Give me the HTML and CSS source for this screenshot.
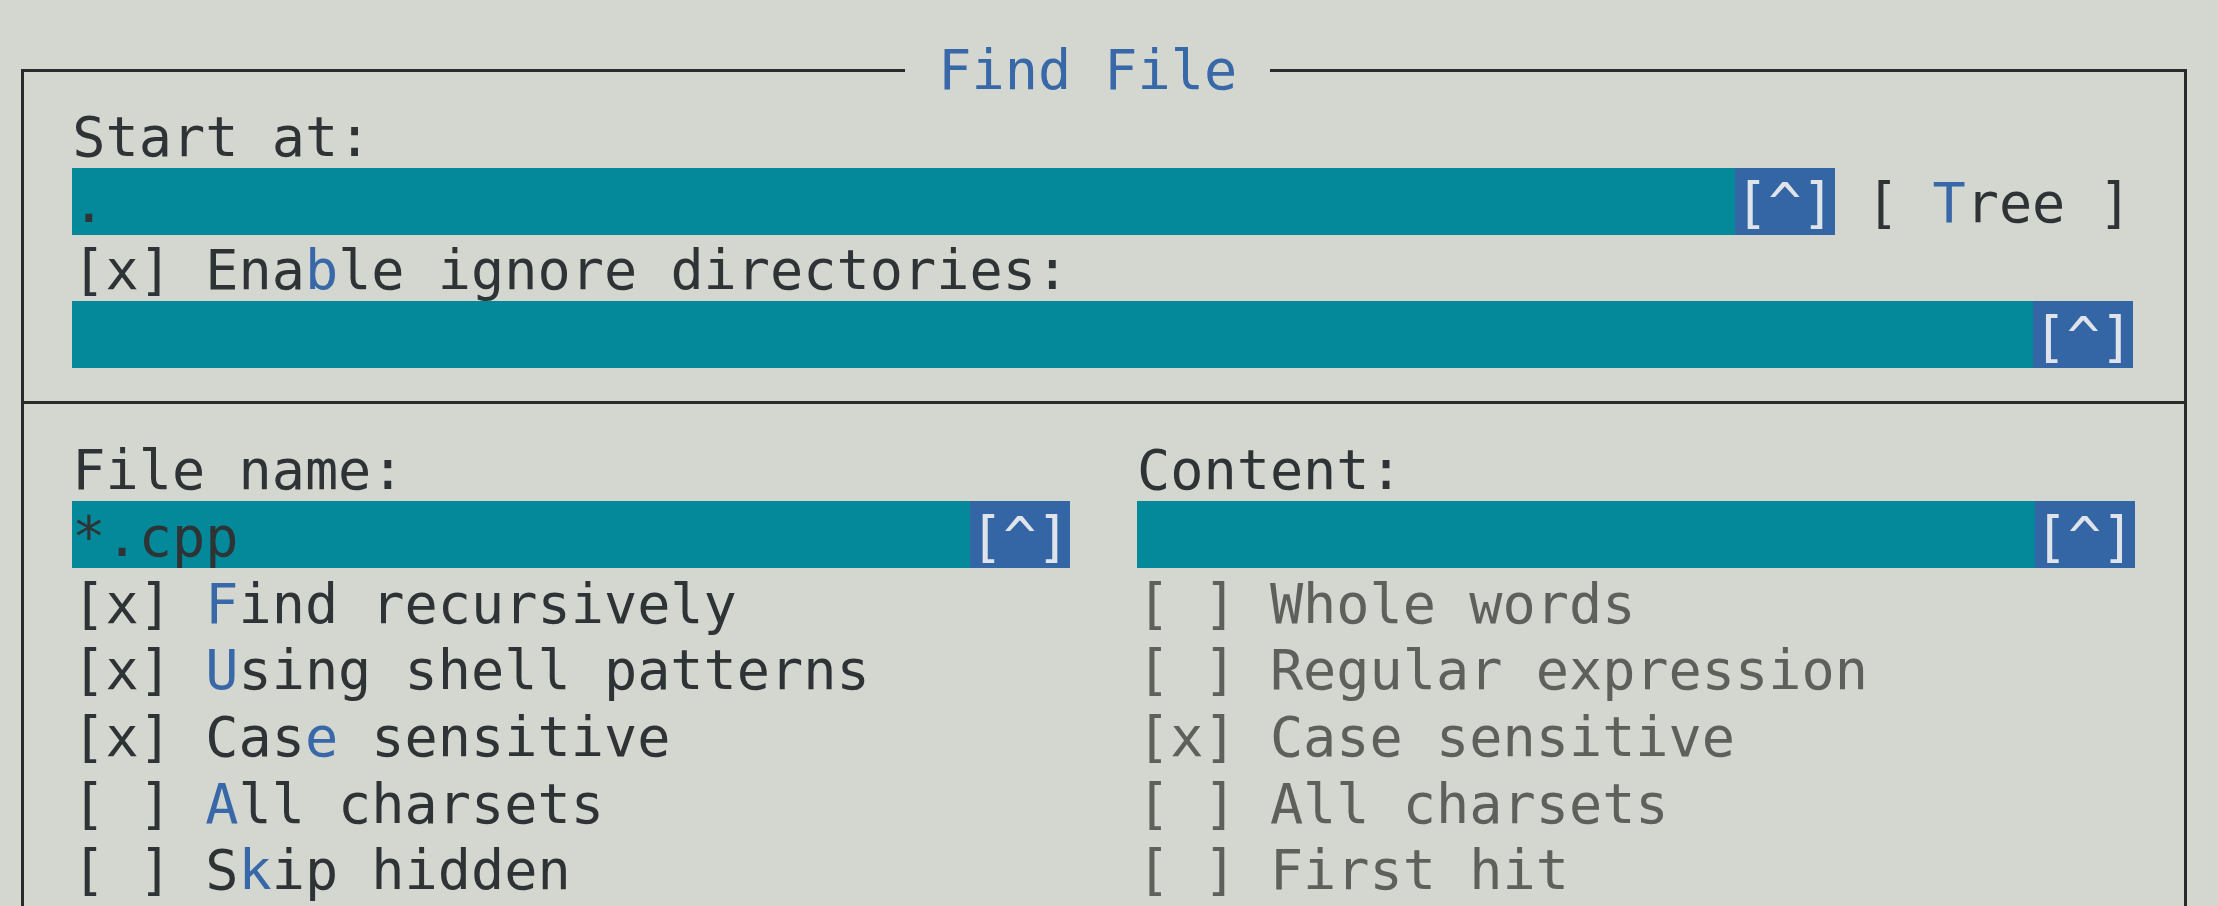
FILE: index.html
```html
<!DOCTYPE html>
<html lang="en">
<head>
<meta charset="utf-8">
<title>Find File</title>
<link rel="stylesheet" href="styles.css">
</head>
<body>
<div class="frame">
  <div class="title"> Find File </div>
  <section class="top">
    <div class="row">Start at:</div>
    <div class="line">
      <div class="input w-start"><span class="val">.</span><span class="hist">[^]</span></div>
      <div class="txt">[ <span class="hk">T</span>ree ]</div>
    </div>
    <div class="row">[x] Ena<span class="hk">b</span>le ignore directories:</div>
    <div class="input w-ignore"><span class="val"></span><span class="hist">[^]</span></div>
  </section>
  <div class="sep"></div>
  <section class="cols">
    <div class="col">
      <div class="row">File name:</div>
      <div class="input w-col"><span class="val">*.cpp</span><span class="hist">[^]</span></div>
      <div class="row">[x] <span class="hk">F</span>ind recursively</div>
      <div class="row">[x] <span class="hk">U</span>sing shell patterns</div>
      <div class="row">[x] Cas<span class="hk">e</span> sensitive</div>
      <div class="row">[ ] <span class="hk">A</span>ll charsets</div>
      <div class="row">[ ] S<span class="hk">k</span>ip hidden</div>
    </div>
    <div class="col">
      <div class="row">Content:</div>
      <div class="input w-col"><span class="val"></span><span class="hist">[^]</span></div>
      <div class="row off">[ ] Whole words</div>
      <div class="row off">[ ] Regular expression</div>
      <div class="row off">[x] Case sensitive</div>
      <div class="row off">[ ] All charsets</div>
      <div class="row off">[ ] First hit</div>
    </div>
  </section>
</div>
</body>
</html>
```
FILE: styles.css
```css
html, body {
  margin: 0;
  padding: 0;
  background: #d3d7cf;
  overflow: hidden;
}
body {
  width: 2218px;
  height: 906px;
  font-family: "DejaVu Sans Mono", "Liberation Mono", monospace;
  font-size: 55.2px;
  color: #2e3436;
}
.frame {
  position: relative;
  box-sizing: border-box;
  width: 2166px;
  margin: 69px 0 0 21px;
  border: 3px solid #272b2c;
  padding: 29.3px 0 60px 48.3px;
}
.title {
  position: absolute;
  left: 881px;
  top: -37.4px;
  height: 66.7px;
  box-sizing: border-box;
  padding-top: 5.5px;
  line-height: 61.2px;
  white-space: pre;
  color: #3868a8;
  background: #d3d7cf;
}
.row, .txt {
  height: 66.7px;
  box-sizing: border-box;
  padding-top: 5.5px;
  line-height: 61.2px;
  white-space: pre;
}
.hk { color: #3868a8; }
.off { color: #5d605b; }
.line {
  display: flex;
  gap: 31px;
}
.input {
  height: 66.7px;
  display: flex;
  background: #03899a;
}
.input .val, .input .hist {
  box-sizing: border-box;
  height: 66.7px;
  padding-top: 5.5px;
  line-height: 61.2px;
  white-space: pre;
}
.input .val { flex: 1; }
.input .hist {
  width: 100px;
  text-align: center;
  background: #3465a4;
  color: #dfe3ea;
}
.w-start { width: 1762.7px; }
.w-ignore { width: 2061px; }
.w-col { width: 997.7px; }
.sep {
  height: 3px;
  background: #272b2c;
  margin: 33px 0 30.7px -48.3px;
}
.cols {
  display: grid;
  grid-template-columns: 997.7px 997px;
  column-gap: 67px;
}
```
